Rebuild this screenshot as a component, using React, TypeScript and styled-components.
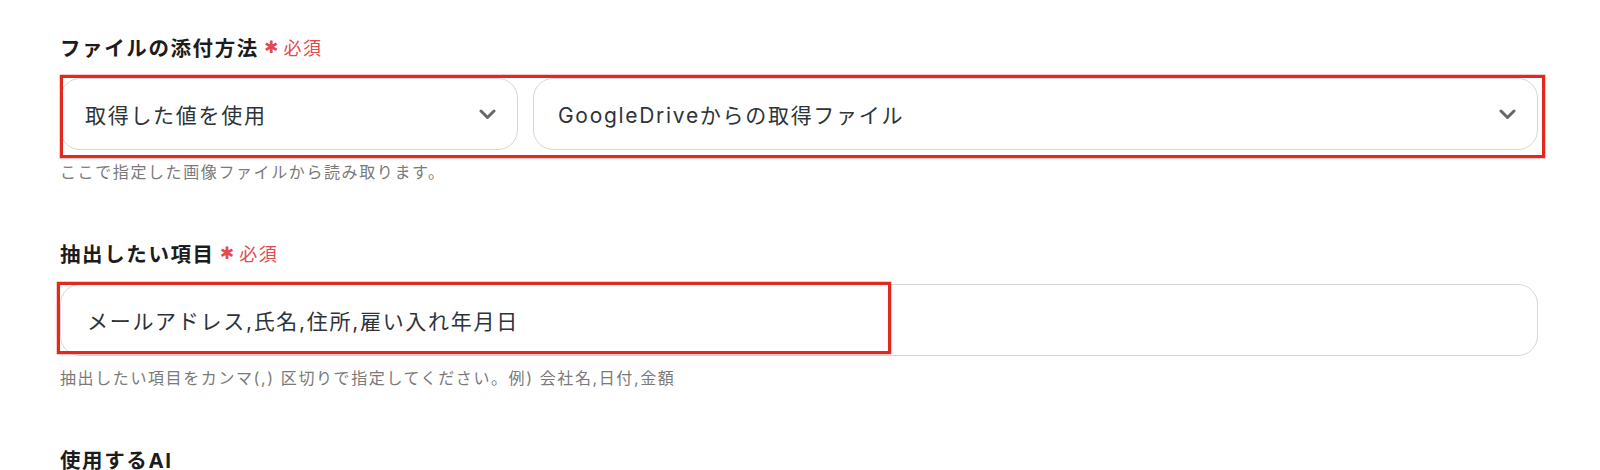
import React from 'react';
import styled, { createGlobalStyle } from 'styled-components';

const GlobalStyle = createGlobalStyle`
  body {
    margin: 0;
    background: #ffffff;
    font-family: 'Inter', 'Noto Sans CJK JP', sans-serif;
  }
`;

const Page = styled.div`
  padding: 32px 62px 0 60px;
`;

const Section = styled.section`
  margin-bottom: 55px;
`;

const Label = styled.div`
  display: flex;
  align-items: center;
  height: 30px;
  font-size: 20.5px;
  font-weight: 700;
  letter-spacing: 1.6px;
  color: #1c1c1c;
`;

const Required = styled.span`
  display: inline-flex;
  align-items: center;
  margin-left: 5px;
  font-size: 18px;
  font-weight: 400;
  letter-spacing: 1.4px;
  color: #e5484d;
`;

const Star = styled.span`
  font-family: 'DejaVu Sans', sans-serif;
  font-size: 17px;
  line-height: 1;
  margin-right: 4px;
`;

const FieldRow = styled.div<{ $cols?: string }>`
  position: relative;
  margin-top: 16px;
  display: grid;
  grid-template-columns: ${({ $cols }) => $cols || '1fr'};
  gap: 15px;
`;

const Select = styled.div`
  height: 72px;
  box-sizing: border-box;
  display: flex;
  align-items: center;
  justify-content: space-between;
  padding: 0 21px 0 24px;
  border: 1px solid #d3d6db;
  border-radius: 20px;
  background: #fff;
  font-size: 21px;
  letter-spacing: 1.7px;
  color: #2e3338;
`;

const Input = styled.div`
  height: 72px;
  box-sizing: border-box;
  display: flex;
  align-items: center;
  padding: 0 26px;
  border: 1px solid #d3d6db;
  border-radius: 20px;
  background: #fff;
  font-size: 21px;
  letter-spacing: 1.7px;
  color: #2e3338;
`;

const Helper = styled.p`
  margin: 11px 0 0;
  font-size: 16px;
  line-height: 22px;
  letter-spacing: 1.6px;
  color: #7a7a7a;
`;

/* red annotation frame drawn over the fields */
const Highlight = styled.div<{ $top: number; $left: number; $right?: number; $bottom: number; $width?: number }>`
  position: absolute;
  top: ${({ $top }) => $top}px;
  left: ${({ $left }) => $left}px;
  bottom: ${({ $bottom }) => $bottom}px;
  ${({ $right }) => ($right !== undefined ? `right: ${$right}px;` : '')}
  ${({ $width }) => ($width !== undefined ? `width: ${$width}px;` : '')}
  border: 3px solid #e3291d;
  box-shadow: 0 0 0 0.5px rgba(227, 41, 29, 0.5);
  box-sizing: border-box;
  pointer-events: none;
`;

const Chevron = () => (
  <svg width="17" height="11" viewBox="0 0 17 11" fill="none">
    <polyline points="2,2 8.5,8.5 15,2" stroke="#676767" strokeWidth="3" strokeLinecap="round" strokeLinejoin="round" />
  </svg>
);

const RequiredMark = () => (
  <Required>
    <Star>✱</Star>必須
  </Required>
);

export default function App() {
  return (
    <Page>
      <GlobalStyle />
      <Section>
        <Label>
          ファイルの添付方法
          <RequiredMark />
        </Label>
        <FieldRow $cols="458px 1fr">
          <Select>
            <span>取得した値を使用</span>
            <Chevron />
          </Select>
          <Select>
            <span>GoogleDriveからの取得ファイル</span>
            <Chevron />
          </Select>
          <Highlight $top={-3} $left={0} $right={-7} $bottom={-8} />
        </FieldRow>
        <Helper>ここで指定した画像ファイルから読み取ります。</Helper>
      </Section>

      <Section>
        <Label>
          抽出したい項目
          <RequiredMark />
        </Label>
        <FieldRow>
          <Input>メールアドレス,氏名,住所,雇い入れ年月日</Input>
          <Highlight $top={-2} $left={-3} $width={834} $bottom={2} />
        </FieldRow>
        <Helper>抽出したい項目をカンマ(,) 区切りで指定してください。例) 会社名,日付,金額</Helper>
      </Section>

      <Section>
        <Label>使用するAI</Label>
      </Section>
    </Page>
  );
}
